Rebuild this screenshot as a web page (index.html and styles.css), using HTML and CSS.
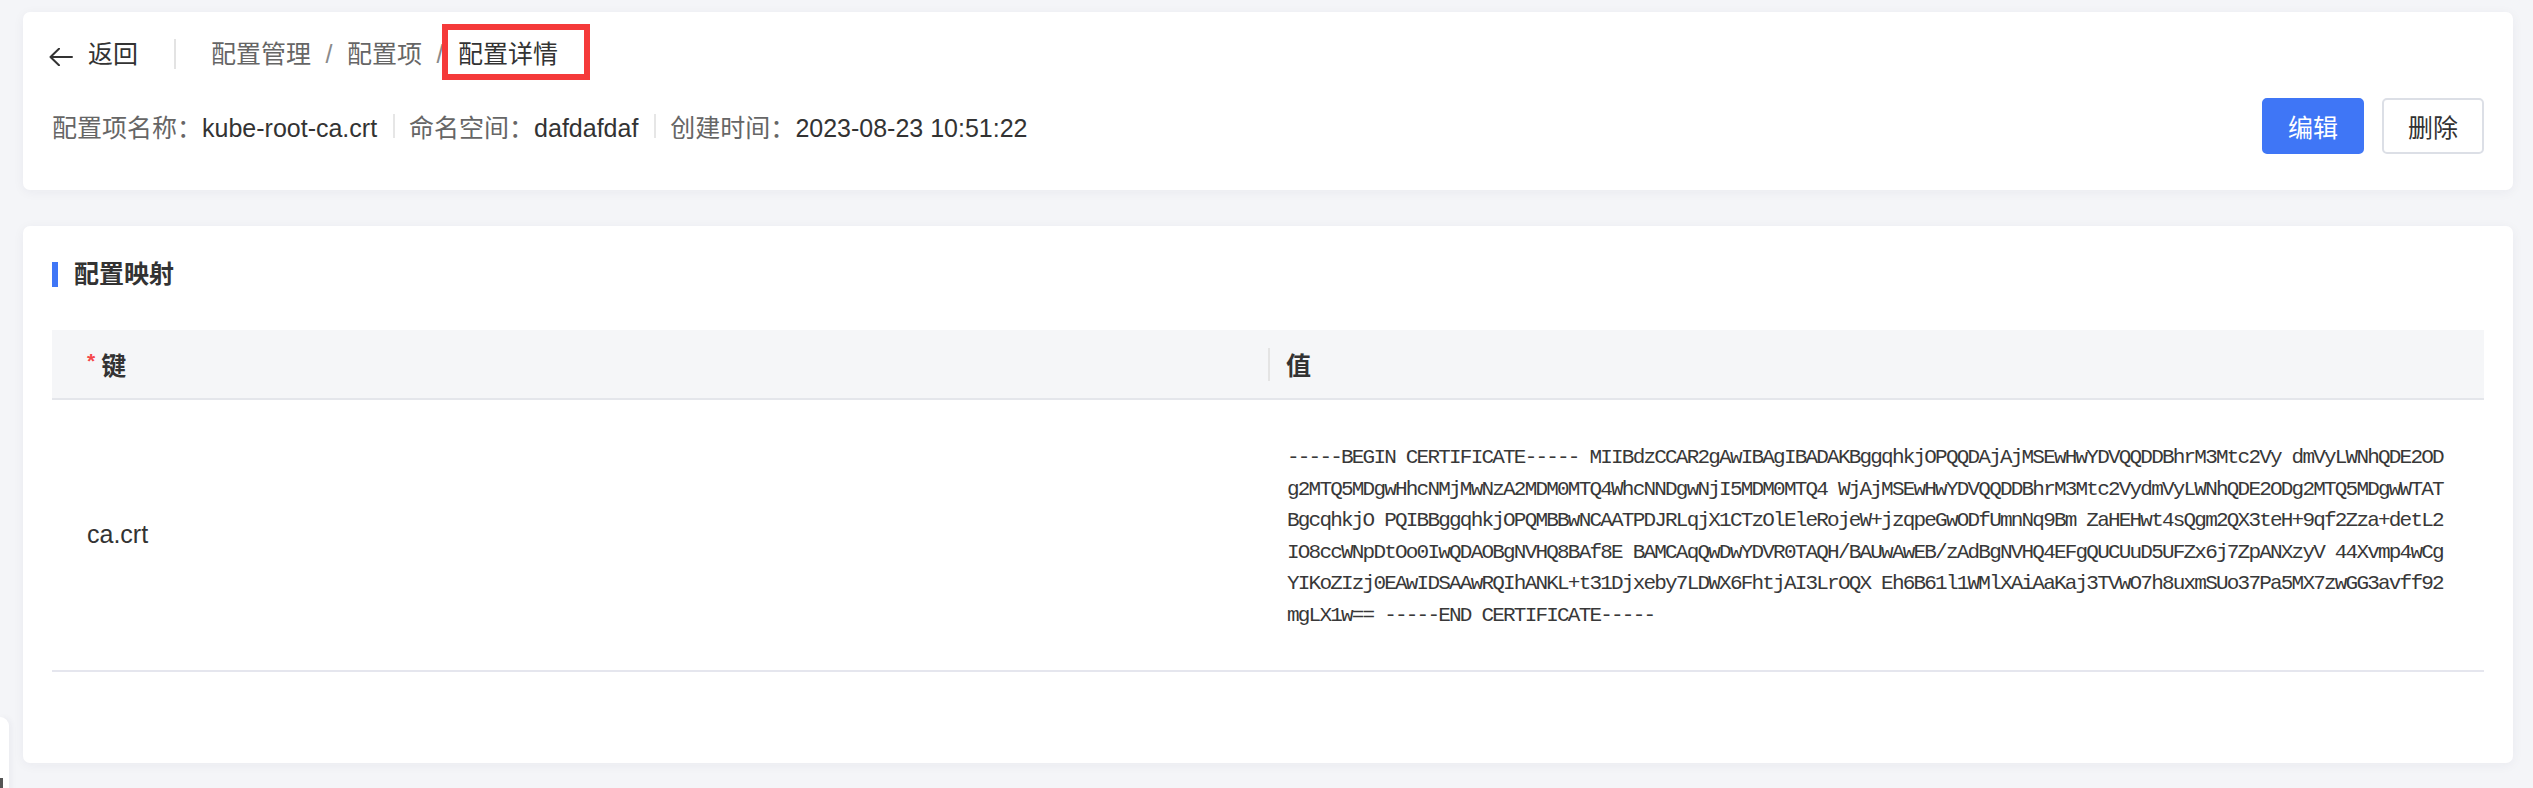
FILE: index.html
```html
<!DOCTYPE html>
<html lang="zh-CN">
<head>
<meta charset="utf-8">
<title>配置详情</title>
<link rel="stylesheet" href="styles.css">
</head>
<body>
<main class="page">
  <section class="card head-card">
    <div class="nav-row">
      <a class="back">
        <svg class="back-icon" width="24" height="18" viewBox="0 0 24 18"><path d="M23 9H1.5M10 0.8L1.5 9l8.5 8.2" fill="none" stroke="#333" stroke-width="2" stroke-linecap="round" stroke-linejoin="round"/></svg>
        <span>返回</span>
      </a>
      <span class="vsep"></span>
      <nav class="crumbs">
        <span class="crumb">配置管理</span>
        <span class="slash">/</span>
        <span class="crumb">配置项</span>
        <span class="slash">/</span>
        <span class="crumb current">配置详情</span>
      </nav>
    </div>
    <div class="info-row">
      <div class="meta">
        <span class="meta-item"><span class="label">配置项名称：</span><span class="value">kube-root-ca.crt</span></span>
        <span class="meta-sep"></span>
        <span class="meta-item"><span class="label">命名空间：</span><span class="value">dafdafdaf</span></span>
        <span class="meta-sep"></span>
        <span class="meta-item"><span class="label">创建时间：</span><span class="value">2023-08-23 10:51:22</span></span>
      </div>
      <div class="actions">
        <button class="btn primary">编辑</button>
        <button class="btn">删除</button>
      </div>
    </div>
  </section>
  <section class="card map-card">
    <h2 class="title">配置映射</h2>
    <div class="table">
      <div class="thead">
        <div class="th"><span class="req">*</span>键</div>
        <div class="th th-val">值</div>
      </div>
      <div class="tr">
        <div class="td key">ca.crt</div>
        <div class="td val"><div class="cert">-----BEGIN CERTIFICATE----- MIIBdzCCAR2gAwIBAgIBADAKBggqhkjOPQQDAjAjMSEwHwYDVQQDDBhrM3Mtc2Vy dmVyLWNhQDE2ODg2MTQ5MDgwHhcNMjMwNzA2MDM0MTQ4WhcNNDgwNjI5MDM0MTQ4 WjAjMSEwHwYDVQQDDBhrM3Mtc2VydmVyLWNhQDE2ODg2MTQ5MDgwWTATBgcqhkjO PQIBBggqhkjOPQMBBwNCAATPDJRLqjX1CTzOlEleRojeW+jzqpeGwODfUmnNq9Bm ZaHEHwt4sQgm2QX3teH+9qf2Zza+detL2IO8ccWNpDtOo0IwQDAOBgNVHQ8BAf8E BAMCAqQwDwYDVR0TAQH/BAUwAwEB/zAdBgNVHQ4EFgQUCUuD5UFZx6j7ZpANXzyV 44Xvmp4wCgYIKoZIzj0EAwIDSAAwRQIhANKL+t31Djxeby7LDWX6FhtjAI3LrOQX Eh6B61l1WMlXAiAaKaj3TVwO7h8uxmSUo37Pa5MX7zwGG3avff92mgLX1w== -----END CERTIFICATE-----</div></div>
      </div>
    </div>
  </section>
</main>
<div class="edge-tab"><span class="edge-mark"></span></div>
</body>
</html>
```

FILE: styles.css
```css
* {
  box-sizing: border-box;
  margin: 0;
  padding: 0;
}

html,
body {
  height: 100%;
}

body {
  background: #f4f5f8;
  font-family: "Liberation Sans", "Noto Sans CJK SC", sans-serif;
  font-size: 25px;
  color: #333;
  overflow: hidden;
}

.page {
  padding: 12px 20px 0 23px;
  display: flex;
  flex-direction: column;
  gap: 36px;
}

.card {
  background: #fff;
  border-radius: 7px;
  box-shadow: 0 2px 12px rgba(30, 40, 80, 0.05);
}

/* ---------- header card ---------- */
.head-card {
  padding: 24px 29px 36px 29px;
  display: flex;
  flex-direction: column;
  gap: 26px;
}

.nav-row {
  display: flex;
  align-items: center;
  height: 36px;
  line-height: 36px;
}

.back {
  display: flex;
  align-items: center;
  gap: 15px;
  margin-left: -3px;
  color: #333;
  cursor: pointer;
}

.back-icon {
  display: block;
  transform: translateY(3px);
}

.vsep {
  width: 2px;
  height: 30px;
  background: #e3e3e3;
  margin: 0 35px 0 36px;
}

.crumbs {
  display: flex;
  align-items: center;
}

.crumb {
  color: #666;
}

.slash {
  color: #8a8a8a;
  margin: 0 14.5px;
}

.crumb.current {
  color: #333;
  position: relative;
}

.crumb.current::after {
  content: "";
  position: absolute;
  left: -16px;
  right: -32px;
  top: -12px;
  bottom: -8px;
  border: 6px solid #f53a3a;
}

.info-row {
  display: flex;
  align-items: center;
  justify-content: space-between;
  height: 56px;
}

.meta {
  display: flex;
  align-items: center;
}

.label {
  color: #666;
}

.value {
  color: #333;
}

.meta-sep {
  width: 2px;
  height: 24px;
  background: #e6e6e6;
  margin: 0 14px 0 16px;
}

.actions {
  display: flex;
  gap: 18px;
}

.btn {
  width: 102px;
  height: 56px;
  border-radius: 5px;
  border: 2px solid #dcdfe6;
  background: #fff;
  color: #333;
  font-family: inherit;
  font-size: 25px;
  cursor: pointer;
}

.btn.primary {
  background: #3f76f6;
  border-color: #3f76f6;
  color: #fff;
}

/* ---------- map card ---------- */
.map-card {
  padding: 36px 29px 91px 29px;
}

.title {
  display: flex;
  align-items: center;
  gap: 16px;
  height: 25px;
  line-height: 25px;
  font-size: 25px;
  font-weight: bold;
  color: #333;
  margin-bottom: 43px;
}

.title::before {
  content: "";
  width: 6px;
  height: 25px;
  background: #3f76f6;
}

.thead,
.tr {
  display: grid;
  grid-template-columns: 1fr 1fr;
}

.thead {
  height: 70px;
  background: #f5f6f8;
  border-bottom: 2px solid #e4e6eb;
}

.th {
  display: flex;
  align-items: center;
  padding-left: 35px;
  font-weight: bold;
  color: #333;
}

.req {
  color: #f5484a;
  font-size: 21px;
  margin-right: 6px;
  align-self: center;
  transform: translateY(-3px);
}

.th-val {
  position: relative;
  padding-left: 18px;
}

.th-val::before {
  content: "";
  position: absolute;
  left: 0;
  top: 18px;
  width: 2px;
  height: 33px;
  background: #e4e4e4;
}

.tr {
  border-bottom: 2px solid #e5e6ee;
}

.td.key {
  align-self: center;
  padding-left: 35px;
  color: #333;
}

.td.val {
  padding: 42px 37px 38px 19px;
}

.cert {
  font-family: "Liberation Mono", monospace;
  font-size: 21px;
  letter-spacing: -1.8px;
  line-height: 31.6px;
  word-break: break-all;
  color: #383838;
}

/* ---------- left edge tab ---------- */
.edge-tab {
  position: fixed;
  left: 0;
  top: 717px;
  width: 9px;
  height: 80px;
  background: #fff;
  border-top-right-radius: 10px;
  box-shadow: 2px 0 6px rgba(30, 40, 80, 0.05);
}

.edge-mark {
  display: block;
  margin-top: 61px;
  width: 3px;
  height: 12px;
  background: #555;
}
```
